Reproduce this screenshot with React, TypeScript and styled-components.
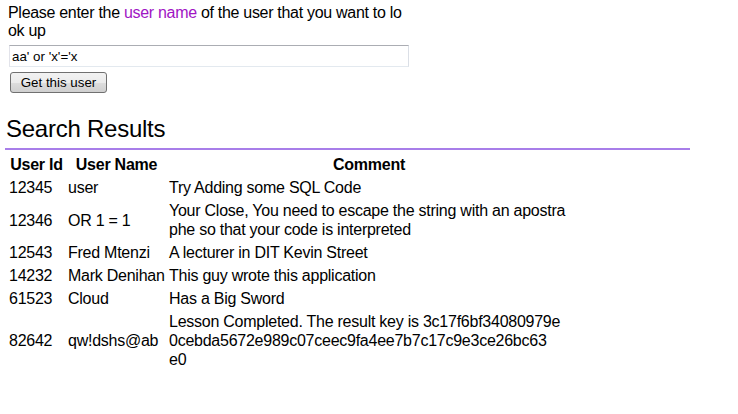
import React from 'react'
import styled, { createGlobalStyle } from 'styled-components'

const GlobalStyle = createGlobalStyle`
    body {
        margin: 0;
        background: #ffffff;
        color: #000000;
        font-family: "Liberation Sans", Arial, sans-serif;
    }
`;

const Page = styled.div`
    width: 685px;
    padding: 4px 0 0 5px;
`;

const LookupForm = styled.form`
    display: flex;
    flex-direction: column;
    align-items: flex-start;
    margin: 0 0 0 3px;
`;

const Prompt = styled.p`
    margin: 0;
    font-size: 16px;
    line-height: 18px;
    letter-spacing: -0.3px;
    white-space: nowrap;
`;

const Highlight = styled.span`
    color: #a014c4;
`;

const UserInput = styled.input`
    box-sizing: border-box;
    width: 400px;
    height: 22px;
    margin: 5px 0 0 1px;
    padding: 0 2px;
    border: 1px solid;
    border-color: #abadb3 #dbdfe6 #e3e9ef #e2e3ea;
    font-family: "Liberation Sans", Arial, sans-serif;
    font-size: 13.33px;
    color: #000;
    outline: none;
`;

const SubmitButton = styled.button`
    box-sizing: border-box;
    width: 97px;
    height: 21px;
    margin: 5px 0 0 2px;
    padding: 0;
    border: 1px solid #707070;
    border-radius: 3px;
    background: linear-gradient(#f2f2f2 0%, #ebebeb 50%, #dddddd 51%, #cfcfcf 100%);
    font-family: "Liberation Sans", Arial, sans-serif;
    font-size: 13.33px;
    color: #000;
`;

const ResultsTitle = styled.h2`
    margin: 22px 0 0;
    padding: 0 0 5px 1px;
    font-size: 24px;
    line-height: 28px;
    font-weight: normal;
    letter-spacing: -0.25px;
    border-bottom: 2px solid #a87ee9;
`;

const ResultsTable = styled.table`
    width: 566px;
    margin: 2px 0 0 1px;
    table-layout: fixed;
    border-collapse: separate;
    border-spacing: 2px;
    font-size: 16px;
    line-height: 19px;
    letter-spacing: -0.25px;
`;

const HeadCell = styled.th<{ $w: number }>`
    width: ${p => p.$w}px;
    padding: 1px;
    font-weight: bold;
    text-align: center;
    white-space: nowrap;
`;

const Cell = styled.td`
    padding: 1px;
    text-align: left;
    vertical-align: middle;
    white-space: nowrap;
`;

const users = [
    { id: '12345', name: 'user', comment: ['Try Adding some SQL Code'] },
    { id: '12346', name: 'OR 1 = 1', comment: ['Your Close, You need to escape the string with an apostra', 'phe so that your code is interpreted'] },
    { id: '12543', name: 'Fred Mtenzi', comment: ['A lecturer in DIT Kevin Street'] },
    { id: '14232', name: 'Mark Denihan', comment: ['This guy wrote this application'] },
    { id: '61523', name: 'Cloud', comment: ['Has a Big Sword'] },
    { id: '82642', name: 'qw!dshs@ab', comment: ['Lesson Completed. The result key is 3c17f6bf34080979e', '0cebda5672e989c07ceec9fa4ee7b7c17c9e3ce26bc63', 'e0'] },
];

export default function App() {
    return (
        <Page>
            <GlobalStyle />
            <LookupForm onSubmit={e => e.preventDefault()}>
                <Prompt>
                    Please enter the <Highlight>user name</Highlight> of the user that you want to lo<br />ok up
                </Prompt>
                <UserInput defaultValue="aa' or 'x'='x" />
                <SubmitButton type="submit">Get this user</SubmitButton>
            </LookupForm>
            <ResultsTitle>Search Results</ResultsTitle>
            <ResultsTable>
                <thead>
                    <tr>
                        <HeadCell $w={55}>User Id</HeadCell>
                        <HeadCell $w={97}>User Name</HeadCell>
                        <HeadCell $w={400}>Comment</HeadCell>
                    </tr>
                </thead>
                <tbody>
                    {users.map(u => (
                        <tr key={u.id}>
                            <Cell>{u.id}</Cell>
                            <Cell>{u.name}</Cell>
                            <Cell>
                                {u.comment.map((line, i) => (
                                    <React.Fragment key={i}>{i > 0 ? <br /> : null}{line}</React.Fragment>
                                ))}
                            </Cell>
                        </tr>
                    ))}
                </tbody>
            </ResultsTable>
        </Page>
    )
}
